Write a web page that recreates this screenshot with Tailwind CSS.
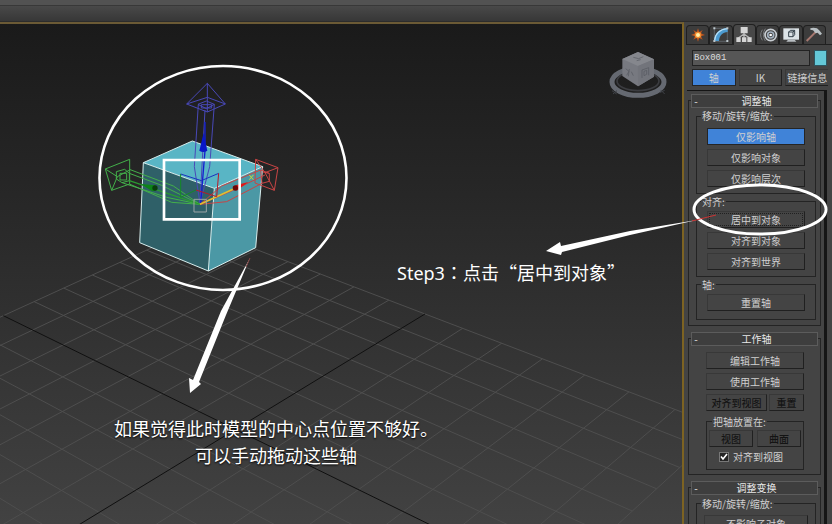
<!DOCTYPE html>
<html lang="zh-CN">
<head>
<meta charset="utf-8">
<meta name="viewport" content="width=device-width, initial-scale=1">
<title>Box001 - 层次面板</title>
<script src="https://cdn.jsdelivr.net/npm/@tailwindcss/browser@4"></script>
</head>
<body class="relative flex h-screen flex-col overflow-hidden bg-[#444444] font-['Noto_Sans_CJK_SC',sans-serif] text-[10px] leading-3 text-[#d0d0d0]">

<header class="shrink-0">
  <div class="h-[6px] border-b border-[#383838] bg-[#525252]"></div>
  <div class="h-4 border-b border-[#2c2c2c] bg-linear-to-b from-[#494949] to-[#373737]"></div>
</header>

<div class="flex min-h-0 flex-1">
  <main class="relative min-w-0 flex-1 overflow-hidden border-t-2 border-r-2 border-t-[#6b5a35] border-r-[#7d6322] bg-linear-to-b from-[#1a1a1a] to-[#424242]"></main>

  <aside class="flex w-[148px] shrink-0 flex-col overflow-hidden bg-[#444444] pt-[3px]">
    <nav class="ml-[2px] flex h-5 shrink-0 items-end border-b border-[#202020] pr-[6px]" aria-label="命令面板">
      <button aria-label="创建" class="h-[19px] flex-1 rounded-t-sm border border-b-0 border-[#202020] bg-[#3c3c3c]">
        <svg class="mx-auto h-[18px] w-[20px]" viewBox="32 77 60 54"><path d="M62 84l4 11 10-6-5 10 12 5-12 4 5 10-10-5-4 11-4-11-10 5 5-10-12-4 12-5-5-10 10 6z" fill="#b65320"/><circle cx="62" cy="104" r="10" fill="#ee8a30"/><circle cx="62" cy="104" r="6" fill="#fff0a8"/></svg>
      </button>
      <button aria-label="修改" class="h-[19px] flex-1 rounded-t-sm border border-b-0 border-[#202020] bg-[#3c3c3c]">
        <svg class="mx-auto h-[18px] w-[20px]" viewBox="102 77 60 54"><path d="M112 84h39v39h-39z" fill="none" stroke="#6d767b" stroke-width="2"/><path d="M112 122c0-22 15-38 40-39v12c-15 1-25 10-26 27z" fill="#4c9bd0"/><path d="M113 120c1-19 15-33 38-35" fill="none" stroke="#b9e0f6" stroke-width="4"/><path d="M109 81h6v6h-6zM148 81h6v6h-6zM109 119h6v6h-6zM148 119h6v6h-6z" fill="#bcc7cc"/></svg>
      </button>
      <button aria-label="层次" aria-pressed="true" class="-mb-px h-[21px] flex-1 rounded-t-sm border border-b-0 border-[#202020] bg-[#484848]">
        <svg class="mx-auto h-[18px] w-[20px]" viewBox="172 77 60 54"><path d="M202 97v15M202 101l-17 12M202 101l17 12" stroke="#b8b8b8" stroke-width="4"/><path d="M192 80h21v19h-21zM179 111h13v14h-13zM196 111h13v14h-13zM212 111h13v14h-13z" fill="#d5d5d5"/></svg>
      </button>
      <button aria-label="运动" class="h-[19px] flex-1 rounded-t-sm border border-b-0 border-[#202020] bg-[#3c3c3c]">
        <svg class="mx-auto h-[18px] w-[20px]" viewBox="242 77 60 54"><g fill="none"><path d="M255 88q-10 16 0 32M264 85q-12 18 0 37" stroke="#77797b" stroke-width="3"/><circle cx="280" cy="104" r="17" stroke="#c8cdd2" stroke-width="5"/><circle cx="280" cy="104" r="9" stroke="#a4b2c0" stroke-width="5"/></g><circle cx="280" cy="104" r="4" fill="#fff"/></svg>
      </button>
      <button aria-label="显示" class="h-[19px] flex-1 rounded-t-sm border border-b-0 border-[#202020] bg-[#3c3c3c]">
        <svg class="mx-auto h-[18px] w-[20px]" viewBox="314 77 60 54"><path d="M321 84h47v34h-47z" fill="#dce3e7"/><path d="M335 118h20l5 6h-30z" fill="#b8bec2"/><path d="M337 95l5-5h13v13l-5 6h-13zM337 95h13v14M350 95l5-5" fill="none" stroke="#34404a" stroke-width="3"/></svg>
      </button>
      <button aria-label="实用程序" class="h-[19px] flex-1 rounded-t-sm border border-b-0 border-[#202020] bg-[#3c3c3c]">
        <svg class="mx-auto h-[18px] w-[20px]" viewBox="384 77 60 54"><path d="M392 122l28-28" stroke="#a67870" stroke-width="6"/><path d="M403 84l9-2 11 2 8 7 7 9-6 5-7-8-6 2-8-9-8-2z" fill="#b9c0c4"/></svg>
      </button>
    </nav>

    <div class="mt-[5px] flex shrink-0 gap-1 pr-[5px] pl-2">
      <input aria-label="对象名称" value="Box001" class="h-4 min-w-0 flex-1 border border-[#222222] bg-[#565656] px-px font-['Liberation_Mono',monospace] text-[9px] text-[#dddddd]">
      <button aria-label="对象颜色" class="h-4 w-[13px] border border-[#2d5560] bg-[#64c8d8]"></button>
    </div>
    <div class="mt-[3px] flex h-[17px] shrink-0 gap-[3px] pr-1 pl-2">
      <button aria-pressed="true" class="min-w-0 flex-1 border border-[#252525] bg-[#4083d8] whitespace-nowrap">轴</button>
      <button class="min-w-0 flex-1 border border-t-[#383838] border-r-[#202020] border-b-[#202020] border-l-[#383838] whitespace-nowrap">IK</button>
      <button class="flex min-w-0 flex-1 items-center justify-center border border-r-0 border-t-[#383838] border-b-[#202020] border-l-[#383838] whitespace-nowrap">链接信息</button>
    </div>

    <div class="mt-1 mr-[5px] ml-[3px] min-h-0 flex-1 overflow-hidden border-t border-r-[3px] border-[#151515] pr-[3px] pl-px">

      <section class="mt-[9px] h-[226px] border border-[#242424]">
        <h2 class="-mt-[7px] mr-[2px] ml-[2px] flex h-[14px] items-center border border-[#5c5c5c] bg-[#3e3e3e] text-[#e8e8e8]"><button aria-label="折叠调整轴" class="w-2 text-center">-</button><span class="flex-1 pr-1 text-center">调整轴</span></h2>
        <fieldset class="mr-[4px] ml-[7px] mt-[2px] h-[84px]">
          <div class="relative mt-[6px] flex h-[78px] flex-col gap-1 border border-[#242424] px-[10px] pt-[11px]">
            <span class="absolute -top-[7px] left-1 bg-[#444444] px-px whitespace-nowrap">移动/旋转/缩放:</span>
            <button aria-pressed="true" class="h-[17px] shrink-0 border border-[#252525] bg-[#4083d8]">仅影响轴</button>
            <button class="h-[17px] shrink-0 border border-t-[#383838] border-r-[#202020] border-b-[#202020] border-l-[#383838]">仅影响对象</button>
            <button class="h-[17px] shrink-0 border border-t-[#383838] border-r-[#202020] border-b-[#202020] border-l-[#383838]">仅影响层次</button>
          </div>
        </fieldset>
        <fieldset class="mr-[4px] ml-[7px] h-[83px]">
          <div class="relative mt-[7px] flex h-[76px] flex-col gap-1 border border-[#242424] px-[10px] pt-[9px]">
            <span class="absolute -top-[6px] left-1 bg-[#444444] px-px whitespace-nowrap">对齐:</span>
            <button class="h-[17px] shrink-0 border border-t-[#383838] border-r-[#202020] border-b-[#202020] border-l-[#383838] p-px"><span class="block h-full border border-dotted border-[#202020] leading-[11px]">居中到对象</span></button>
            <button class="h-[17px] shrink-0 border border-t-[#383838] border-r-[#202020] border-b-[#202020] border-l-[#383838]">对齐到对象</button>
            <button class="h-[17px] shrink-0 border border-t-[#383838] border-r-[#202020] border-b-[#202020] border-l-[#383838]">对齐到世界</button>
          </div>
        </fieldset>
        <fieldset class="mr-[4px] ml-[7px] h-[43px]">
          <div class="relative mt-[7px] flex h-9 flex-col border border-[#242424] px-[10px] pt-[9px]">
            <span class="absolute -top-[6px] left-1 bg-[#444444] px-px whitespace-nowrap">轴:</span>
            <button class="h-[17px] shrink-0 border border-t-[#383838] border-r-[#202020] border-b-[#202020] border-l-[#383838]">重置轴</button>
          </div>
        </fieldset>
      </section>

      <section class="mt-3 h-[137px] border border-[#242424]">
        <h2 class="-mt-[7px] mr-[2px] ml-[2px] flex h-[14px] items-center border border-[#5c5c5c] bg-[#3e3e3e] text-[#e8e8e8]"><button aria-label="折叠工作轴" class="w-2 text-center">-</button><span class="flex-1 pr-1 text-center">工作轴</span></h2>
        <div class="mr-4 ml-[17px] mt-[6px] flex flex-col gap-1">
          <button class="h-[17px] border border-t-[#383838] border-r-[#202020] border-b-[#202020] border-l-[#383838]">编辑工作轴</button>
          <button class="h-[17px] border border-t-[#383838] border-r-[#202020] border-b-[#202020] border-l-[#383838]">使用工作轴</button>
          <div class="flex gap-[2px] font-medium text-[#141414]">
            <button disabled class="h-[17px] w-[61px] border border-t-[#383838] border-r-[#202020] border-b-[#202020] border-l-[#383838] whitespace-nowrap">对齐到视图</button>
            <button disabled class="h-[17px] flex-1 border border-t-[#383838] border-r-[#202020] border-b-[#202020] border-l-[#383838] whitespace-nowrap">重置</button>
          </div>
          <fieldset>
            <div class="relative mt-[6px] h-[49px] border border-[#242424] px-[2px] pt-[8px]">
              <span class="absolute -top-[6px] left-[5px] bg-[#444444] px-px whitespace-nowrap">把轴放置在:</span>
              <div class="flex gap-1 font-medium text-[#141414]">
                <button disabled class="h-[17px] flex-1 border border-t-[#383838] border-r-[#202020] border-b-[#202020] border-l-[#383838]">视图</button>
                <button disabled class="h-[17px] flex-1 border border-t-[#383838] border-r-[#202020] border-b-[#202020] border-l-[#383838]">曲面</button>
              </div>
              <label class="mt-1 ml-[10px] flex items-center gap-1 whitespace-nowrap">
                <span class="relative size-[10px]">
                  <input type="checkbox" checked class="block size-[10px] appearance-none border border-[#777777] bg-[#242424]">
                  <svg class="pointer-events-none absolute top-0 left-0 size-[10px]" viewBox="0 0 10 10"><path d="M2 4.5l2 2.500 4-5" fill="none" stroke="#fff" stroke-width="1.600"/></svg>
                </span>
                对齐到视图
              </label>
            </div>
          </fieldset>
        </div>
      </section>

      <section class="mt-3 h-[138px] border border-[#242424]">
        <h2 class="-mt-[7px] mr-[2px] ml-[2px] flex h-[14px] items-center border border-[#5c5c5c] bg-[#3e3e3e] text-[#e8e8e8]"><button aria-label="折叠调整变换" class="w-2 text-center">-</button><span class="flex-1 pr-1 text-center">调整变换</span></h2>
        <fieldset class="mr-[4px] ml-[7px]">
          <div class="relative mt-[8px] flex h-[78px] flex-col gap-1 border border-[#242424] px-[7px] pt-[11px]">
            <span class="absolute -top-[6px] left-1 bg-[#444444] px-px whitespace-nowrap">移动/旋转/缩放:</span>
            <button class="h-[17px] shrink-0 border border-t-[#383838] border-r-[#202020] border-b-[#202020] border-l-[#383838]">不影响子对象</button>
          </div>
        </fieldset>
      </section>
    </div>
  </aside>
</div>

<!-- Viewport contents and call-outs, which reach over the panel -->
<svg class="pointer-events-none absolute top-0 left-0 h-[524px] w-[832px]" viewBox="0 0 832 524" fill="none" aria-hidden="true">
  <defs><clipPath id="view"><path d="M0 25H682V524H0z"/></clipPath></defs>
  <g id="grid" clip-path="url(#view)" stroke="#4e4e4e"></g>

  <!-- View cube -->
  <g transform="translate(590 30) scale(.33333)">
    <ellipse cx="144" cy="156" rx="78" ry="40" stroke="#656971" stroke-width="15"/>
    <ellipse cx="144" cy="153" rx="63" ry="29" stroke="#3b3c40" stroke-width="5"/>
    <path d="M144 66l48 22v52l-48 29-47-31V87z" fill="#777980"/>
    <path d="M144 66l48 22-48 20-47-21z" fill="#85878d"/>
    <path d="M144 108l48-20v52l-48 29z" fill="#72747b"/>
    <path d="M130 82l16 4 14-6M140 92l12-3M107 116l10 8-7 12M118 117l-3 22M124 125l6 12M156 120l20-7v23M156 120v24M162 124l8-3v12l-8 4z" stroke="#55575f" stroke-width="2"/>
    <path d="M66 182l14 10M81 182l-12 10M209 188l15-7M212 180l12 12" stroke="#3f4248" stroke-width="3"/>
  </g>

  <!-- Box and move gizmo -->
  <g transform="translate(90 60) scale(.33333)" stroke-width="3">
    <path d="M307 243L518 320 373 385 160 308z" fill="#59b5c5"/>
    <path d="M160 308L373 385 355 633 149 548z" fill="#2f6068"/>
    <path d="M373 385L518 320 497 563 355 633z" fill="#4b98a5"/>
    <path d="M307 243L518 320 497 563 355 633 149 548 160 308zM160 308L373 385 518 320M373 385L355 633" stroke="#d8eeee"/>
    <g stroke="#4848b8">
      <path d="M352 70L290 132 352 112 406 132zM290 132L352 156 406 132M352 70V156M324 133l25-10 24 10-24 13zM334 134h31v10h-31zM325 133L313 320 330 430M373 133L359 320 330 430M345 150L330 430"/>
    </g>
    <path d="M345 186v86L332 430" stroke="#1420d0" stroke-width="4"/>
    <path d="M341 218l-13 54q12 8 24 0z" fill="#0a18c8"/>
    <g stroke="#43b04a">
      <path d="M46 327L119 298V372L65 391zM46 327L82 350 65 391M82 350L119 330M79 335L104 328 118 340V362L96 368 79 357zM90 340h20v20H90zM118 328L250 378 330 433M118 340L215 376 330 433M118 372L245 427 330 433M96 368L230 412 330 433"/>
    </g>
    <path d="M118 362L330 433" stroke="#2a9a30" stroke-width="4"/>
    <path d="M152 372L196 376V392L187 394z" fill="#0d8418"/><circle cx="195" cy="384" r="8" fill="#0a3f0d"/>
    <g stroke="#c84444">
      <path d="M497 298L564 323 553 391 495 369zM497 298L525 338 564 323M525 338L553 391M512 330L538 340V364L516 370zM518 336l20 4M512 330L395 378 330 433M525 345L420 395 330 433M516 370L410 425 330 433"/>
    </g>
    <path d="M330 433L437 384" stroke="#e0c030" stroke-width="5"/>
    <path d="M437 376L475 366 440 392z" fill="#e01616"/><circle cx="436" cy="384" r="8" fill="#6a0808"/>
    <path d="M478 345l12 14M490 345l-12 14" stroke="#c8d838"/>
    <path d="M272 342L334 362 386 340" stroke="#1b30c0"/>
    <path d="M272 342V412L318 390" stroke="#158a25"/>
    <path d="M386 340L380 410 318 390" stroke="#b81a28"/>
    <path d="M312 418h37v38h-37z" stroke="#9ca5a7"/>
    <path d="M222 300H449V478H222z" stroke="#fff" stroke-width="8"/>
  </g>

  <!-- Call-out rings and arrows -->
  <g stroke="#fff">
    <ellipse cx="223" cy="178" rx="123.500" ry="112" stroke-width="2.600"/>
    <ellipse cx="760" cy="209.500" rx="66" ry="24.500" stroke-width="3"/>
  </g>
  <g fill="#fff">
    <path d="M250 258L226 315 199 382 201 384 190 393 189 378 193 380 221 311z"/>
    <path d="M697 220L630 235 562 252 561 255 546 251 560 242 561 246 630 231z"/>
  </g>
  <path d="M692 221L716 215" stroke="#c33" stroke-width="1"/>
  <path d="M250 258L246 267" stroke="#7e4040" stroke-width="1"/>
</svg>

<p class="absolute top-[261px] left-[397px] text-lg leading-[22px] whitespace-nowrap text-white"><span class="font-['Noto_Sans',sans-serif]">Step3</span><span class="font-['Noto_Sans_CJK_TC',sans-serif]" lang="zh-TW">：</span>点击“居中到对象”</p>
<p class="absolute top-[415px] left-[114px] text-center text-lg leading-[27px] whitespace-nowrap text-white [text-shadow:0_1px_2px_#000]">如果觉得此时模型的中心点位置不够好。<br>可以手动拖动这些轴</p>

<script>
  // Ground plane: 14 x 14 cells in perspective, axes drawn in black.
  const project = (u, v) => {
    const w = 1 - 0.022 * u + 0.0215 * v;
    return [(33.09 * u + 36.21 * v + 235.5) / w, (9.3 * u - 9.74 * v + 429.4) / w];
  };
  const grid = document.getElementById('grid');
  const addLine = (a, b, axis) => {
    const line = document.createElementNS('http://www.w3.org/2000/svg', 'line');
    line.setAttribute('x1', a[0]); line.setAttribute('y1', a[1]);
    line.setAttribute('x2', b[0]); line.setAttribute('y2', b[1]);
    if (axis) line.setAttribute('stroke', '#101010');
    grid.appendChild(line);
  };
  for (const i of [-7, -6, -5, -4, -3, -2, -1, 1, 2, 3, 4, 5, 6, 7, 0]) {
    addLine(project(i, -7), project(i, 7), i === 0);
    addLine(project(-7, i), project(7, i), i === 0);
  }
</script>
</body>
</html>
